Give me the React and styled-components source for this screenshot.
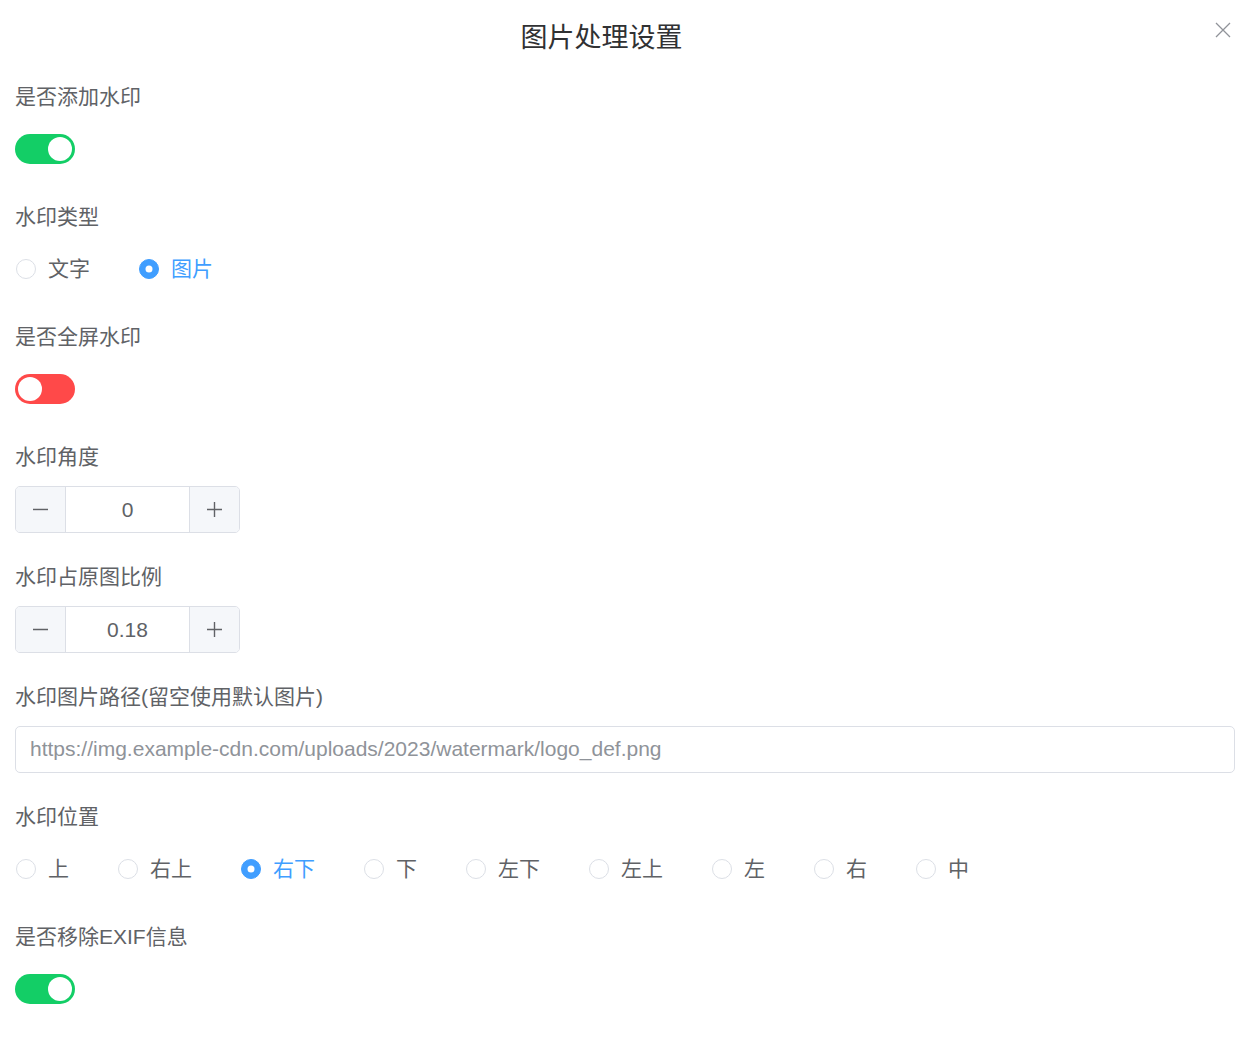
import React, { useState } from 'react';
import styled, { createGlobalStyle } from 'styled-components';

const GlobalStyle = createGlobalStyle`
  html, body {
    margin: 0;
    padding: 0;
    background: #ffffff;
  }
  body {
    font-family: "Liberation Sans", "Noto Sans CJK SC", sans-serif;
    color: #606266;
  }
  * {
    box-sizing: border-box;
  }
`;

const Dialog = styled.div`
  position: relative;
  width: 1257px;
  min-height: 1043px;
  background: #fff;
`;

const Header = styled.header`
  padding: 20px 54px 26px 0;
  text-align: center;
`;

const Title = styled.h2`
  margin: 0;
  font-size: 27px;
  line-height: 36px;
  font-weight: 400;
  color: #303133;
`;

const CloseBtn = styled.button`
  position: absolute;
  top: 21px;
  right: 26px;
  width: 17px;
  height: 17px;
  padding: 0;
  border: none;
  background: transparent;
  cursor: pointer;
  display: flex;
  align-items: center;
  justify-content: center;
`;

const Body = styled.div`
  padding: 0 22px 0 15px;
`;

const Section = styled.div`
  margin-bottom: 30px;
`;

const Label = styled.div`
  font-size: 21px;
  line-height: 30px;
  color: #606266;
  margin-bottom: 14px;
`;

const Control = styled.div`
  height: 46px;
  display: flex;
  align-items: center;
`;

const SwitchTrack = styled.button`
  position: relative;
  width: 60px;
  height: 30px;
  padding: 0;
  border: none;
  border-radius: 15px;
  background: ${(p) => (p.$on ? '#13ce66' : '#ff4949')};
  cursor: pointer;

  &::after {
    content: '';
    position: absolute;
    top: 3px;
    left: ${(p) => (p.$on ? '33px' : '3px')};
    width: 24px;
    height: 24px;
    border-radius: 50%;
    background: #fff;
    transition: left 0.2s;
  }
`;

const RadioGroup = styled.div`
  display: flex;
  align-items: center;
  gap: 48px;
`;

const RadioItem = styled.label`
  display: flex;
  align-items: center;
  gap: 12px;
  margin-left: 1px;
  cursor: pointer;
  font-size: 21px;
  line-height: 30px;
  color: ${(p) => (p.$checked ? '#409eff' : '#606266')};
`;

const RadioCircle = styled.span`
  position: relative;
  width: 20px;
  height: 20px;
  border-radius: 50%;
  border: 1px solid ${(p) => (p.$checked ? '#409eff' : '#dcdfe6')};
  background: ${(p) => (p.$checked ? '#409eff' : '#fff')};

  &::after {
    content: '';
    display: ${(p) => (p.$checked ? 'block' : 'none')};
    position: absolute;
    top: 50%;
    left: 50%;
    width: 7px;
    height: 7px;
    border-radius: 50%;
    background: #fff;
    transform: translate(-50%, -50%);
  }
`;

const NumberBox = styled.div`
  position: relative;
  display: flex;
  width: 225px;
  height: 47px;
  border: 1px solid #dcdfe6;
  border-radius: 5px;
  overflow: hidden;
`;

const StepBtn = styled.button`
  width: 50px;
  height: 100%;
  padding: 0;
  border: none;
  ${(p) => (p.$side === 'left' ? 'border-right' : 'border-left')}: 1px solid #dcdfe6;
  background: #f5f7fa;
  display: flex;
  align-items: center;
  justify-content: center;
  cursor: pointer;
`;

const NumberValue = styled.div`
  flex: 1;
  text-align: center;
  font-size: 21px;
  line-height: 45px;
  color: #606266;
`;

const TextInput = styled.input`
  width: 100%;
  height: 47px;
  padding: 0 14px;
  border: 1px solid #dcdfe6;
  border-radius: 5px;
  font-family: inherit;
  font-size: 21px;
  color: #8f9399;
  outline: none;
`;

function Switch({ value, onChange }) {
  return <SwitchTrack $on={value} onClick={() => onChange(!value)} />;
}

function Radios({ options, value, onChange }) {
  return (
    <RadioGroup>
      {options.map((opt) => (
        <RadioItem key={opt} $checked={opt === value} onClick={() => onChange(opt)}>
          <RadioCircle $checked={opt === value} />
          {opt}
        </RadioItem>
      ))}
    </RadioGroup>
  );
}

const Minus = () => (
  <svg width="17" height="17" viewBox="0 0 17 17">
    <path d="M1 8.5h15" stroke="#606266" strokeWidth="1.4" />
  </svg>
);

const Plus = () => (
  <svg width="17" height="17" viewBox="0 0 17 17">
    <path d="M1 8.5h15M8.5 1v15" stroke="#606266" strokeWidth="1.4" />
  </svg>
);

function NumberInput({ value, onChange, step }) {
  const dec = String(step).split('.')[1]?.length || 0;
  return (
    <NumberBox>
      <StepBtn $side="left" onClick={() => onChange(+(value - step).toFixed(dec))}>
        <Minus />
      </StepBtn>
      <NumberValue>{value}</NumberValue>
      <StepBtn $side="right" onClick={() => onChange(+(value + step).toFixed(dec))}>
        <Plus />
      </StepBtn>
    </NumberBox>
  );
}

export default function App() {
  const [watermark, setWatermark] = useState(true);
  const [type, setType] = useState('图片');
  const [fullscreen, setFullscreen] = useState(false);
  const [angle, setAngle] = useState(0);
  const [ratio, setRatio] = useState(0.18);
  const [path, setPath] = useState('https://img.example-cdn.com/uploads/2023/watermark/logo_def.png');
  const [position, setPosition] = useState('右下');
  const [removeExif, setRemoveExif] = useState(true);

  return (
    <Dialog>
      <GlobalStyle />
      <Header>
        <Title>图片处理设置</Title>
      </Header>
      <CloseBtn aria-label="close">
        <svg width="16" height="16" viewBox="0 0 16 16">
          <path d="M1 1l14 14M15 1L1 15" stroke="#909399" strokeWidth="1.3" />
        </svg>
      </CloseBtn>
      <Body>
        <Section>
          <Label>是否添加水印</Label>
          <Control>
            <Switch value={watermark} onChange={setWatermark} />
          </Control>
        </Section>
        <Section>
          <Label>水印类型</Label>
          <Control>
            <Radios options={['文字', '图片']} value={type} onChange={setType} />
          </Control>
        </Section>
        <Section>
          <Label>是否全屏水印</Label>
          <Control>
            <Switch value={fullscreen} onChange={setFullscreen} />
          </Control>
        </Section>
        <Section>
          <Label>水印角度</Label>
          <Control>
            <NumberInput value={angle} onChange={setAngle} step={1} />
          </Control>
        </Section>
        <Section>
          <Label>水印占原图比例</Label>
          <Control>
            <NumberInput value={ratio} onChange={setRatio} step={0.01} />
          </Control>
        </Section>
        <Section>
          <Label>水印图片路径(留空使用默认图片)</Label>
          <Control>
            <TextInput value={path} onChange={(e) => setPath(e.target.value)} />
          </Control>
        </Section>
        <Section>
          <Label>水印位置</Label>
          <Control>
            <Radios
              options={['上', '右上', '右下', '下', '左下', '左上', '左', '右', '中']}
              value={position}
              onChange={setPosition}
            />
          </Control>
        </Section>
        <Section>
          <Label>是否移除EXIF信息</Label>
          <Control>
            <Switch value={removeExif} onChange={setRemoveExif} />
          </Control>
        </Section>
      </Body>
    </Dialog>
  );
}
